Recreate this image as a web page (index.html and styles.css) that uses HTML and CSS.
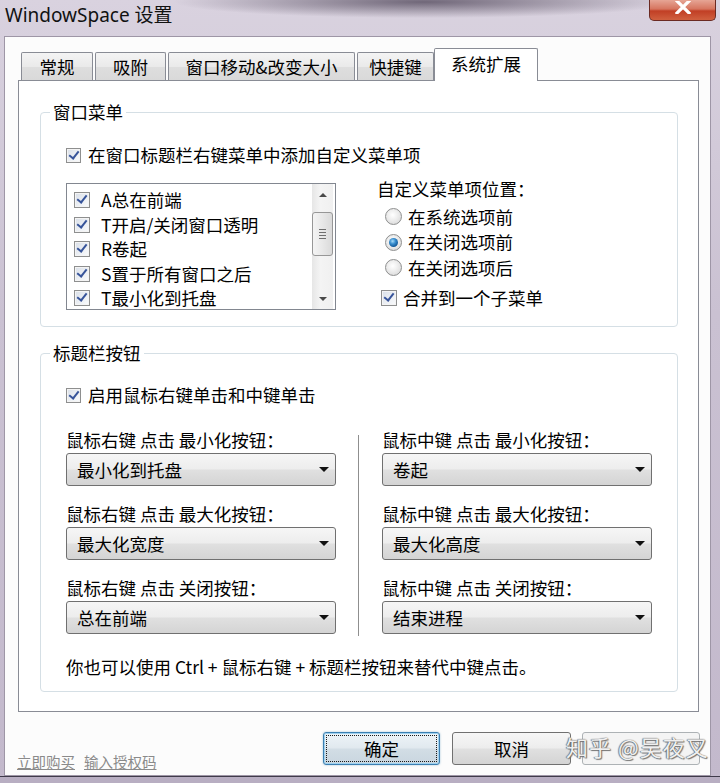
FILE: index.html
```html
<!DOCTYPE html>
<html lang="zh-CN">
<head>
<meta charset="utf-8">
<title>WindowSpace 设置</title>
<link rel="stylesheet" href="styles.css">
</head>
<body>
<div class="window">
  <div class="titlebar">
    <span class="title">WindowSpace 设置</span>
    <div class="close">
      <svg width="16" height="13" viewBox="0 0 16 13"><path d="M2 0 L14 12 M14 0 L2 12" stroke="#fff" stroke-width="3.2" stroke-linecap="square"/></svg>
    </div>
  </div>
  <div class="client">
    <div class="tabs">
      <div class="tab w1">常规</div>
      <div class="tab w2">吸附</div>
      <div class="tab w3">窗口移动&amp;改变大小</div>
      <div class="tab w4">快捷键</div>
      <div class="tab active w5">系统扩展</div>
    </div>
    <div class="panel">
      <fieldset class="group g1">
        <legend>窗口菜单</legend>
        <div class="group-body">
          <div class="row"><span class="cb"></span><span class="row-text">在窗口标题栏右键菜单中添加自定义菜单项</span></div>
          <div class="g1-main">
            <div class="listbox">
              <div class="items">
                <div class="item"><span class="cb"></span>A总在前端</div>
                <div class="item"><span class="cb"></span>T开启/关闭窗口透明</div>
                <div class="item"><span class="cb"></span>R卷起</div>
                <div class="item"><span class="cb"></span>S置于所有窗口之后</div>
                <div class="item"><span class="cb"></span>T最小化到托盘</div>
              </div>
              <div class="scrollbar">
                <div class="sb-arrow"><span class="tri up"></span></div>
                <div class="thumb"></div>
                <div class="sb-space"></div>
                <div class="sb-arrow"><span class="tri down"></span></div>
              </div>
            </div>
            <div class="options">
              <div class="opt-label">自定义菜单项位置：</div>
              <div class="radios">
                <div class="radio-row"><span class="radio"></span>在系统选项前</div>
                <div class="radio-row"><span class="radio on"></span>在关闭选项前</div>
                <div class="radio-row"><span class="radio"></span>在关闭选项后</div>
              </div>
              <div class="row merge"><span class="cb"></span><span class="row-text">合并到一个子菜单</span></div>
            </div>
          </div>
        </div>
      </fieldset>

      <fieldset class="group g2">
        <legend>标题栏按钮</legend>
        <div class="group-body g2-body">
          <div class="row"><span class="cb"></span><span class="row-text">启用鼠标右键单击和中键单击</span></div>
          <div class="columns">
            <div class="col">
              <div class="field-label">鼠标右键 点击 最小化按钮：</div>
              <div class="combo"><span>最小化到托盘</span><span class="tri down big"></span></div>
              <div class="field-label">鼠标右键 点击 最大化按钮：</div>
              <div class="combo"><span>最大化宽度</span><span class="tri down big"></span></div>
              <div class="field-label">鼠标右键 点击 关闭按钮：</div>
              <div class="combo"><span>总在前端</span><span class="tri down big"></span></div>
            </div>
            <div class="divider"></div>
            <div class="col">
              <div class="field-label">鼠标中键 点击 最小化按钮：</div>
              <div class="combo"><span>卷起</span><span class="tri down big"></span></div>
              <div class="field-label">鼠标中键 点击 最大化按钮：</div>
              <div class="combo"><span>最大化高度</span><span class="tri down big"></span></div>
              <div class="field-label">鼠标中键 点击 关闭按钮：</div>
              <div class="combo"><span>结束进程</span><span class="tri down big"></span></div>
            </div>
          </div>
          <div class="note">你也可以使用 Ctrl + 鼠标右键 + 标题栏按钮来替代中键点击。</div>
        </div>
      </fieldset>
    </div>
    <div class="footer">
      <div class="links"><a class="link">立即购买</a><a class="link">输入授权码</a></div>
      <div class="buttons">
        <div class="btn default w-ok">确定</div>
        <div class="btn w-cancel">取消</div>
        <div class="btn disabled w-apply"></div>
      </div>
    </div>
  </div>
  <div class="watermark">知乎 @吴夜叉</div>
</div>
</body>
</html>
```

FILE: styles.css
```css
html, body {
  margin: 0;
  padding: 0;
}
body {
  width: 720px;
  height: 783px;
  overflow: hidden;
  font-family: "Noto Sans CJK SC", "Noto Sans", sans-serif;
  font-size: 17.5px;
  color: #000;
}

.window {
  position: relative;
  width: 720px;
  height: 783px;
  box-sizing: border-box;
  padding: 0 9px 7px 4px;
  display: flex;
  flex-direction: column;
  background: linear-gradient(180deg, #d9d2df 0%, #cac1d2 40%, #c3b9cc 100%);
  box-shadow: inset 0 -6px 0 #b8aec2, inset 0 -7px 0 #3f3a4a;
}

/* title bar */
.titlebar {
  height: 36px;
  flex: none;
  display: flex;
  justify-content: space-between;
  align-items: flex-start;
  background: radial-gradient(ellipse 250px 16px at 420px 2px, rgba(55,45,65,0.65), rgba(55,45,65,0) 100%);
}
.title {
  margin: 3px 0 0 1px;
  font-family: "Noto Sans", "Noto Sans CJK SC", sans-serif;
  font-size: 19px;
  line-height: 24px;
  color: #111;
}
.close {
  width: 67px;
  height: 21px;
  box-sizing: border-box;
  margin-right: -5px;
  border: 1px solid #6b2a22;
  border-top: none;
  border-radius: 0 0 5px 5px;
  background: linear-gradient(180deg, #e6a595 0%, #d6755f 45%, #c13f25 55%, #d0603f 100%);
  display: flex;
  justify-content: center;
  align-items: flex-start;
  padding-top: 1px;
}

/* client area */
.client {
  flex: 1;
  box-sizing: border-box;
  border: 1px solid #9e96a6;
  background: #fcfcfc;
  padding: 11px 0 0 13px;
  display: flex;
  flex-direction: column;
}

.tabs {
  display: flex;
  align-items: flex-end;
  height: 33px;
  margin-left: 3px;
  position: relative;
  z-index: 1;
}
.tab {
  box-sizing: border-box;
  height: 28px;
  margin-bottom: 1px;
  margin-left: 2px;
  border: 1px solid #898c95;
  border-bottom: none;
  border-radius: 2px 2px 0 0;
  background: linear-gradient(180deg, #f4f4f4 0%, #eaeaea 50%, #dedede 51%, #d9d9d9 100%);
  display: flex;
  justify-content: center;
  align-items: center;
  line-height: 24px;
}
.tab.w1 { width: 72px; margin-left: 0; }
.tab.w2 { width: 71px; }
.tab.w3 { width: 187px; }
.tab.w4 { width: 77px; }
.tab.w5 { width: 104px; margin-left: 0; }
.tab.active {
  height: 33px;
  margin-bottom: 0;
  background: #fff;
  padding-bottom: 3px;
}

.panel {
  width: 681px;
  height: 632px;
  box-sizing: border-box;
  margin-top: -1px;
  border: 1px solid #898c95;
  background: #fff;
  padding-top: 20px;
}

/* group boxes */
.group {
  margin: 0 20px 0 21px;
  padding: 0;
  border: 1px solid #d5dfe5;
  border-radius: 4px;
  min-inline-size: 0;
}
.group legend {
  margin-left: 9px;
  padding: 0 3px;
  line-height: 22px;
}
.group-body {
  padding: 20px 25px 16px 25px;
}
.g2 {
  margin-top: 15px;
}
.g2-body {
  padding-top: 19px;
  padding-bottom: 12px;
}

.row {
  display: flex;
  align-items: center;
  height: 24px;
  line-height: 24px;
}
.row-text {
  margin-left: 7px;
}

/* checkbox */
.cb {
  position: relative;
  flex: none;
  width: 15px;
  height: 15px;
  box-sizing: border-box;
  border: 1px solid #8e8f8f;
  background: linear-gradient(135deg, #d9dfe8 0%, #eef1f5 60%, #fafbfc 100%);
  box-shadow: inset 0 0 0 1px #f4f4f4;
}
.cb::after {
  content: "";
  position: absolute;
  left: 4px;
  top: 0px;
  width: 4px;
  height: 8px;
  border-right: 2.5px solid #37549a;
  border-bottom: 2.5px solid #37549a;
  transform: rotate(38deg);
}

.g1-main {
  display: flex;
  align-items: flex-start;
  margin-top: 16px;
}

/* listbox */
.listbox {
  width: 270px;
  height: 127px;
  box-sizing: border-box;
  border: 1px solid #828790;
  background: #fff;
  display: flex;
}
.items {
  flex: 1;
  padding: 4px 0 0 7px;
}
.item {
  display: flex;
  align-items: center;
  height: 24.5px;
  line-height: 24px;
}
.item .cb {
  margin-right: 11px;
  width: 16px;
  height: 16px;
}
.scrollbar {
  width: 21px;
  margin-right: 2px;
  display: flex;
  flex-direction: column;
  background: linear-gradient(90deg, #e6e6e6, #f4f4f4 40%, #f0f0f0);
}
.sb-arrow {
  height: 21px;
  display: flex;
  justify-content: center;
  align-items: center;
}
.thumb {
  height: 44px;
  margin-top: 7px;
  box-sizing: border-box;
  border: 1px solid #979797;
  border-radius: 3px;
  background:
    linear-gradient(#6f6f6f, #6f6f6f) 6px 16px / 7px 1px no-repeat,
    linear-gradient(#6f6f6f, #6f6f6f) 6px 19px / 7px 1px no-repeat,
    linear-gradient(#6f6f6f, #6f6f6f) 6px 22px / 7px 1px no-repeat,
    linear-gradient(#6f6f6f, #6f6f6f) 6px 25px / 7px 1px no-repeat,
    linear-gradient(90deg, #f4f4f4 0%, #e8e8e8 50%, #dadada 100%);
}
.sb-space {
  flex: 1;
}
.tri {
  width: 0;
  height: 0;
  border-left: 4px solid transparent;
  border-right: 4px solid transparent;
}
.tri.up {
  border-bottom: 4px solid #4a4a4a;
}
.tri.down {
  border-top: 4px solid #4a4a4a;
}
.tri.big {
  border-left-width: 5px;
  border-right-width: 5px;
  border-top: 5px solid #111;
}

/* options column */
.options {
  margin-left: 41px;
  margin-top: -6px;
}
.opt-label {
  line-height: 24px;
  height: 24px;
}
.radios {
  margin-top: 3px;
  padding-left: 8px;
}
.radio-row {
  display: flex;
  align-items: center;
  height: 25.5px;
  line-height: 24px;
}
.radio {
  position: relative;
  flex: none;
  width: 17px;
  height: 17px;
  box-sizing: border-box;
  border: 1px solid #8e8f8f;
  border-radius: 50%;
  margin-right: 6px;
  background: radial-gradient(circle at 45% 40%, #ffffff 0%, #ececec 45%, #d2d2d2 100%);
}
.radio.on::after {
  content: "";
  position: absolute;
  left: 3px;
  top: 3px;
  width: 9px;
  height: 9px;
  border-radius: 50%;
  background: radial-gradient(circle at 40% 35%, #a8dcf8 0%, #3a8fcf 35%, #145c9c 70%, #0b3f70 100%);
}
.merge {
  margin-top: 5px;
  padding-left: 4px;
}
.merge .cb {
  width: 16px;
  height: 16px;
}
.merge .row-text {
  margin-left: 6px;
}

/* group 2 columns */
.columns {
  display: flex;
  margin-top: 21px;
}
.col {
  width: 270px;
  display: flex;
  flex-direction: column;
}
.field-label {
  height: 24px;
  line-height: 24px;
  margin-bottom: 1px;
  white-space: nowrap;
}
.combo + .field-label {
  margin-top: 16px;
}
.combo {
  height: 33px;
  box-sizing: border-box;
  border: 1px solid #707070;
  border-radius: 3px;
  background: linear-gradient(180deg, #f6f6f6 0%, #ededed 48%, #e0e0e0 52%, #d4d4d4 100%);
  display: flex;
  justify-content: space-between;
  align-items: center;
  padding: 0 6px 0 10px;
  line-height: 24px;
}
.divider {
  width: 1px;
  height: 201px;
  margin: 7px 23px 0 22px;
  background: #8f8f8f;
  box-shadow: 1px 0 0 #fff;
}
.note {
  margin-top: 19px;
  line-height: 24px;
  white-space: nowrap;
}

/* footer */
.footer {
  width: 682px;
  display: flex;
  justify-content: space-between;
  align-items: flex-start;
  padding-top: 20px;
}
.links {
  margin-top: 20px;
  margin-left: -1px;
  display: flex;
  gap: 9px;
  font-size: 14.5px;
  line-height: 20px;
}
.link {
  color: #8a8a8a;
  text-decoration: underline;
}
.buttons {
  display: flex;
}
.btn {
  height: 33px;
  box-sizing: border-box;
  border: 1px solid #707070;
  border-radius: 3px;
  background: linear-gradient(180deg, #f6f6f6 0%, #ededed 48%, #e0e0e0 52%, #d4d4d4 100%);
  display: flex;
  justify-content: center;
  align-items: center;
  line-height: 24px;
  margin-left: 11px;
}
.btn.w-ok { width: 117px; margin-left: 0; }
.btn.w-cancel { width: 119px; margin-left: 12px; }
.btn.w-apply { width: 118px; }
.btn.default {
  border-color: #3c7fb1;
  background: linear-gradient(180deg, #eef4f8 0%, #e1e9ef 48%, #d2dde5 52%, #c9d6df 100%);
  box-shadow: inset 0 0 0 1px #9fd1ef, 0 0 2px rgba(60,127,177,0.5);
  outline: 1px dotted #1a1a1a;
  outline-offset: -4px;
}
.btn.disabled {
  border-color: #adb2b5;
  background: #f4f4f4;
  color: #9a9a9a;
}

/* watermark overlay */
.watermark {
  position: absolute;
  left: 566px;
  top: 731px;
  font-size: 22px;
  line-height: 30px;
  letter-spacing: 1px;
  color: rgba(255,255,255,0.92);
  text-shadow: 0 0 1px #555, 1px 1px 1px #777, -1px 0 1px #888;
  white-space: nowrap;
}
```
